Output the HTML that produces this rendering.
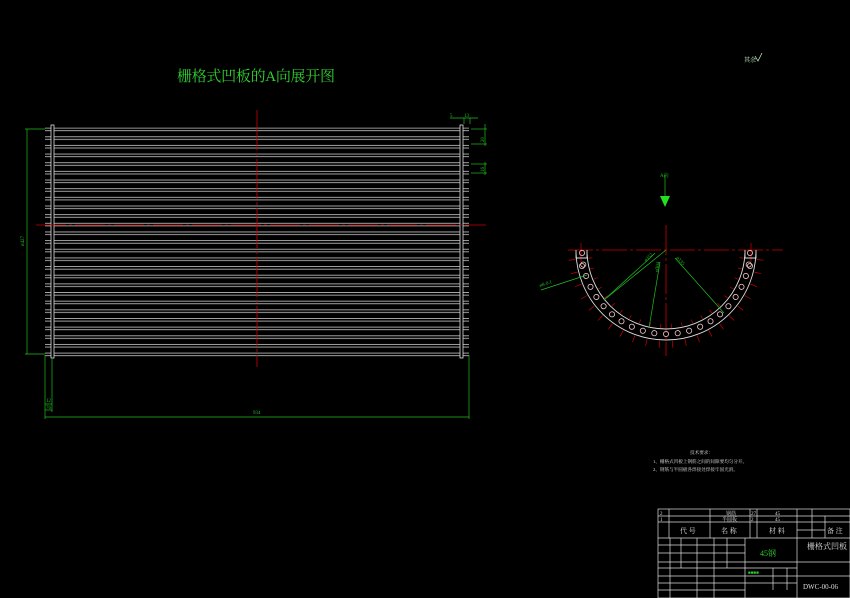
<!DOCTYPE html>
<html><head><meta charset="utf-8"><style>
html,body{margin:0;padding:0;background:#000;width:850px;height:598px;overflow:hidden}
svg{display:block}
text{font-family:"Liberation Serif","Noto Serif CJK SC",serif}
</style></head><body>
<svg width="850" height="598" viewBox="0 0 850 598" xmlns="http://www.w3.org/2000/svg">
<defs>
<pattern id="rods" patternUnits="userSpaceOnUse" x="0" y="127.6" width="850" height="8.654">
<rect x="-1" y="0.5" width="852" height="2.6" fill="none" stroke="#c8c8c8" stroke-width="0.8"/>
</pattern>
<circle id="h" cx="750" cy="250" r="2.6" fill="none" stroke="#f0c8c8" stroke-width="0.8"/>
<g id="tk"><line x1="757" y1="250" x2="764" y2="250" stroke="#c00" stroke-width="0.7"/><line x1="740" y1="250" x2="744" y2="250" stroke="#c00" stroke-width="0.7"/></g>
</defs>

<!-- title -->
<text x="177" y="81" font-size="15" fill="#2fd12f" textLength="158">栅格式凹板的A向展开图</text>
<text x="744" y="62" font-size="6" fill="#cfc">其余</text>
<path d="M755 56 l3 5 l4 -8" fill="none" stroke="#cfc" stroke-width="0.7"/>

<!-- rods -->
<rect x="45" y="127.6" width="424" height="233" fill="url(#rods)" clip-path="none"/>
<rect x="44" y="361" width="430" height="10" fill="#000"/>
<rect x="51" y="125" width="3" height="233" fill="#000" stroke="#ddd" stroke-width="0.8"/>
<rect x="460" y="125" width="3" height="233" fill="#000" stroke="#ddd" stroke-width="0.8"/>

<!-- red centerlines -->
<line x1="36" y1="225" x2="486" y2="225" stroke="#c00" stroke-width="0.8" stroke-dasharray="30 3 3 3"/>
<line x1="257" y1="110" x2="257" y2="367" stroke="#c00" stroke-width="0.8" stroke-dasharray="40 3 3 3"/>

<!-- dimensions -->
<g stroke="#1fbf1f" stroke-width="0.7" fill="none">
<line x1="27" y1="129" x2="27" y2="354"/>
<line x1="25" y1="129" x2="45" y2="129"/>
<line x1="25" y1="354" x2="45" y2="354"/>
<line x1="45" y1="355" x2="45" y2="419"/>
<line x1="52" y1="358" x2="52" y2="412"/>
<line x1="469" y1="355" x2="469" y2="419"/>
<line x1="45" y1="417" x2="469" y2="417"/>
<line x1="45" y1="404" x2="52" y2="404"/>
<line x1="45" y1="410" x2="52" y2="410"/>
<line x1="464" y1="124" x2="464" y2="118"/>
<line x1="470" y1="124" x2="470" y2="118"/>
<line x1="450" y1="118" x2="478" y2="118"/>
<line x1="471" y1="129" x2="487" y2="129"/>
<line x1="471" y1="144" x2="487" y2="144"/>
<line x1="485" y1="124" x2="485" y2="146"/>
<line x1="471" y1="164" x2="487" y2="164"/>
<line x1="471" y1="173" x2="487" y2="173"/>
<line x1="485" y1="162" x2="485" y2="175"/>
</g>
<g fill="#1fbf1f" font-size="5">
<text x="24" y="246" transform="rotate(-90 24 246)">ø427</text>
<text x="253" y="414">934</text>
<text x="46" y="402">12</text>
<text x="46" y="409">76</text>
<text x="450" y="117">5</text>
<text x="464" y="117">13</text>
<text x="484" y="142" transform="rotate(-90 484 142)">20</text>
<text x="484" y="172" transform="rotate(-90 484 172)">16</text>
</g>

<!-- semicircle -->
<line x1="568" y1="250" x2="783" y2="250" stroke="#c00" stroke-width="0.8" stroke-dasharray="25 3 3 3"/>
<line x1="666" y1="225" x2="666" y2="356" stroke="#c00" stroke-width="0.8" stroke-dasharray="30 3 3 3"/>
<line x1="581" y1="243" x2="581" y2="262" stroke="#c00" stroke-width="0.7"/>
<line x1="751" y1="243" x2="751" y2="262" stroke="#c00" stroke-width="0.7"/>
<path d="M576 258 L576 250 A90 90 0 0 0 756 250 L756 258 L745 258 L745 250 A79 79 0 0 1 587 250 L587 258 Z" fill="none" stroke="#ddd" stroke-width="0.9"/>
<g>
<use href="#h" transform="rotate(2 666 250)"/><use href="#h" transform="rotate(10 666 250)"/><use href="#h" transform="rotate(18 666 250)"/><use href="#h" transform="rotate(26 666 250)"/><use href="#h" transform="rotate(34 666 250)"/><use href="#h" transform="rotate(42 666 250)"/><use href="#h" transform="rotate(50 666 250)"/><use href="#h" transform="rotate(58 666 250)"/><use href="#h" transform="rotate(66 666 250)"/><use href="#h" transform="rotate(74 666 250)"/><use href="#h" transform="rotate(82 666 250)"/><use href="#h" transform="rotate(90 666 250)"/><use href="#h" transform="rotate(98 666 250)"/><use href="#h" transform="rotate(106 666 250)"/><use href="#h" transform="rotate(114 666 250)"/><use href="#h" transform="rotate(122 666 250)"/><use href="#h" transform="rotate(130 666 250)"/><use href="#h" transform="rotate(138 666 250)"/><use href="#h" transform="rotate(146 666 250)"/><use href="#h" transform="rotate(154 666 250)"/><use href="#h" transform="rotate(162 666 250)"/><use href="#h" transform="rotate(170 666 250)"/><use href="#h" transform="rotate(178 666 250)"/>
<circle cx="582" cy="266" r="2.6" fill="none" stroke="#f0c8c8" stroke-width="0.8"/>
<circle cx="750" cy="266" r="2.6" fill="none" stroke="#f0c8c8" stroke-width="0.8"/>
</g>
<g>
<use href="#tk" transform="rotate(6 666 250)"/><use href="#tk" transform="rotate(14 666 250)"/><use href="#tk" transform="rotate(22 666 250)"/><use href="#tk" transform="rotate(30 666 250)"/><use href="#tk" transform="rotate(38 666 250)"/><use href="#tk" transform="rotate(46 666 250)"/><use href="#tk" transform="rotate(54 666 250)"/><use href="#tk" transform="rotate(62 666 250)"/><use href="#tk" transform="rotate(70 666 250)"/><use href="#tk" transform="rotate(78 666 250)"/><use href="#tk" transform="rotate(86 666 250)"/><use href="#tk" transform="rotate(94 666 250)"/><use href="#tk" transform="rotate(102 666 250)"/><use href="#tk" transform="rotate(110 666 250)"/><use href="#tk" transform="rotate(118 666 250)"/><use href="#tk" transform="rotate(126 666 250)"/><use href="#tk" transform="rotate(134 666 250)"/><use href="#tk" transform="rotate(142 666 250)"/><use href="#tk" transform="rotate(150 666 250)"/><use href="#tk" transform="rotate(158 666 250)"/><use href="#tk" transform="rotate(166 666 250)"/><use href="#tk" transform="rotate(174 666 250)"/>
</g>
<g stroke="#1fbf1f" stroke-width="0.7" fill="none">
<line x1="666" y1="250" x2="604" y2="300"/>
<line x1="604" y1="300" x2="650" y2="258"/>
<line x1="650" y1="258" x2="655" y2="253"/>
<line x1="660" y1="262" x2="649" y2="328"/>
<line x1="675" y1="258" x2="724" y2="313"/>
<line x1="541" y1="290" x2="587" y2="275"/>
<line x1="665" y1="175" x2="665" y2="200"/>
</g>
<path d="M660 196 L670 196 L665 207 Z" fill="#22e022"/>
<g fill="#1fbf1f" font-size="5">
<text x="660" y="177">A向</text>
<text x="540" y="287" transform="rotate(-18 540 287)">ø8-0.1</text>
<text x="646" y="262" transform="rotate(-45 646 262)">ø352</text>
<text x="658" y="272" transform="rotate(-80 658 272)">ø304</text>
<text x="676" y="258" transform="rotate(48 676 258)">ø335</text>
</g>

<!-- notes -->
<g fill="#ddd" font-family="Liberation Sans,Noto Sans CJK SC,sans-serif" font-size="4.6">
<text x="690" y="454">技术要求：</text>
<text x="653" y="463">1、栅格式凹板上钢筋之间的间隙要均匀分开。</text>
<text x="653" y="471">2、钢筋与半圆板各焊接处焊接牢固光滑。</text>
</g>

<!-- title block -->
<g stroke="#ddd" stroke-width="0.7" fill="none">
<rect x="658" y="509" width="192" height="89"/>
<line x1="658" y1="516" x2="850" y2="516"/>
<line x1="658" y1="522" x2="850" y2="522"/>
<line x1="658" y1="538" x2="850" y2="538"/>
<line x1="658" y1="545" x2="745" y2="545"/>
<line x1="658" y1="553" x2="745" y2="553"/>
<line x1="658" y1="562" x2="850" y2="562"/>
<line x1="658" y1="568" x2="797" y2="568"/>
<line x1="658" y1="576" x2="745" y2="576"/>
<line x1="745" y1="576" x2="850" y2="576"/>
<line x1="658" y1="583" x2="797" y2="583"/>
<line x1="658" y1="590" x2="745" y2="590"/>
<line x1="669" y1="509" x2="669" y2="538"/>
<line x1="710" y1="509" x2="710" y2="538"/>
<line x1="750" y1="509" x2="750" y2="538"/>
<line x1="757" y1="509" x2="757" y2="538"/>
<line x1="797" y1="509" x2="797" y2="598"/>
<line x1="812" y1="509" x2="812" y2="538"/>
<line x1="825" y1="516" x2="825" y2="538"/>
<line x1="797" y1="530" x2="825" y2="530"/>
<line x1="745" y1="538" x2="745" y2="598"/>
<line x1="670" y1="538" x2="670" y2="598"/>
<line x1="681" y1="538" x2="681" y2="568"/>
<line x1="697" y1="538" x2="697" y2="598"/>
<line x1="714" y1="538" x2="714" y2="598"/>
<line x1="727" y1="538" x2="727" y2="568"/>
<line x1="773" y1="568" x2="773" y2="590"/>
<line x1="787" y1="568" x2="787" y2="590"/>
</g>
<g fill="#ddd" font-size="5">
<text x="660" y="515">2</text><text x="660" y="521">1</text>
<text x="726" y="515">钢筋</text><text x="722" y="521">半圆板</text>
<text x="751" y="515">27</text><text x="751" y="521">2</text>
<text x="775" y="515">45</text><text x="775" y="521">45</text>
<text x="680" y="533" font-size="7">代 号</text>
<text x="721" y="533" font-size="7">名 称</text>
<text x="769" y="533" font-size="7">材 料</text>
<text x="827" y="533" font-size="7">备 注</text>
<text x="807" y="549" font-size="8">栅格式凹板</text>
<text x="803" y="589" font-size="7" font-family="Liberation Sans,sans-serif">DWC-00-06</text>
</g>
<text x="760" y="556" font-size="8" fill="#2fd12f" font-family="Liberation Sans,Noto Sans CJK SC,sans-serif">45钢</text>
<text x="748" y="574" font-size="4.5" fill="#2fd12f">■■■■</text>
</svg>
</body></html>
